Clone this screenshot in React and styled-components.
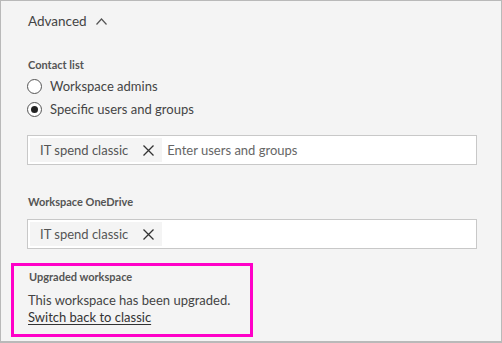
import React from 'react'
import styled, { createGlobalStyle } from 'styled-components'

const GlobalStyle = createGlobalStyle`
  html, body { margin: 0; padding: 0; }
  body { font-family: Lato, "Open Sans", sans-serif; }
`

const Panel = styled.div`
  box-sizing: border-box;
  width: 502px;
  height: 343px;
  background: #f4f4f4;
  border: 1px solid #b9b9b9;
  border-bottom-width: 2px;
  padding: 11px 26px 0 26px;
  display: flex;
  flex-direction: column;
  color: #333;
  overflow: hidden;
`

const Header = styled.div`
  display: flex;
  align-items: center;
  gap: 9px;
  font-size: 13.5px;
  color: #444;
  height: 18px;
  padding-left: 1px;
`

const SectionLabel = styled.div`
  font-size: 11px;
  font-weight: 700;
  color: #555;
  margin-top: ${p => p.$top}px;
  padding-left: 1px;
  white-space: nowrap;
`

const RadioGroup = styled.div`
  display: flex;
  flex-direction: column;
  gap: 9px;
  margin-top: 8px;
`

const RadioRow = styled.label`
  display: flex;
  align-items: center;
  gap: 8px;
  font-size: 13px;
  color: #444;
  height: 14px;
`

const Circle = styled.span`
  box-sizing: border-box;
  width: 15px;
  height: 15px;
  border-radius: 50%;
  border: 1px solid #555;
  background: #fff;
  display: flex;
  align-items: center;
  justify-content: center;
  &::after {
    content: '';
    width: 7px;
    height: 7px;
    border-radius: 50%;
    background: ${p => (p.$checked ? '#222' : 'transparent')};
  }
`

const Field = styled.div`
  box-sizing: border-box;
  height: 30px;
  margin-top: ${p => p.$top}px;
  width: 450px;
  background: #fff;
  border: 1px solid #c8c8c8;
  padding: 2px;
  display: flex;
  align-items: stretch;
`

const Tag = styled.div`
  display: flex;
  align-items: center;
  background: #f4f4f4;
  padding: 0 8px 0 10px;
  gap: 15px;
  font-size: 13px;
  color: #555;
`

const Placeholder = styled.span`
  display: flex;
  align-items: center;
  padding-left: 5px;
  font-size: 13px;
  color: #666;
`

const Highlight = styled.div`
  box-sizing: border-box;
  width: 242px;
  height: 74px;
  margin: 14px 0 0 -16px;
  border: 3px solid #ff00c8;
  padding: 4px 0 0 14px;
  display: flex;
  flex-direction: column;
`

const Body = styled.div`
  font-size: 13px;
  color: #444;
  margin-top: 9px;
  line-height: 17px;
  white-space: nowrap;
`

const Link = styled.a`
  color: #333;
  text-decoration: underline;
  text-underline-offset: 2px;
  display: block;
`

const Chevron = () => (
  <svg width="11" height="7" viewBox="0 0 11 7" fill="none" stroke="#555" strokeWidth="1.2">
    <path d="M0.5 6.5 L5.5 1 L10.5 6.5" />
  </svg>
)

const Cross = () => (
  <svg width="11" height="11" viewBox="0 0 11 11" stroke="#333" strokeWidth="1.3">
    <path d="M0.5 0.5 L10.5 10.5 M10.5 0.5 L0.5 10.5" />
  </svg>
)

export default function App() {
  return (
    <>
      <GlobalStyle />
      <Panel>
        <Header>Advanced <Chevron /></Header>
        <SectionLabel $top={28}>Contact list</SectionLabel>
        <RadioGroup>
          <RadioRow><Circle />Workspace admins</RadioRow>
          <RadioRow><Circle $checked />Specific users and groups</RadioRow>
        </RadioGroup>
        <Field $top={19}>
          <Tag>IT spend classic <Cross /></Tag>
          <Placeholder>Enter users and groups</Placeholder>
        </Field>
        <SectionLabel $top={30}>Workspace OneDrive</SectionLabel>
        <Field $top={11}>
          <Tag>IT spend classic <Cross /></Tag>
        </Field>
        <Highlight>
          <SectionLabel $top={0}>Upgraded workspace</SectionLabel>
          <Body>
            This workspace has been upgraded.
            <Link href="#">Switch back to classic</Link>
          </Body>
        </Highlight>
      </Panel>
    </>
  )
}
